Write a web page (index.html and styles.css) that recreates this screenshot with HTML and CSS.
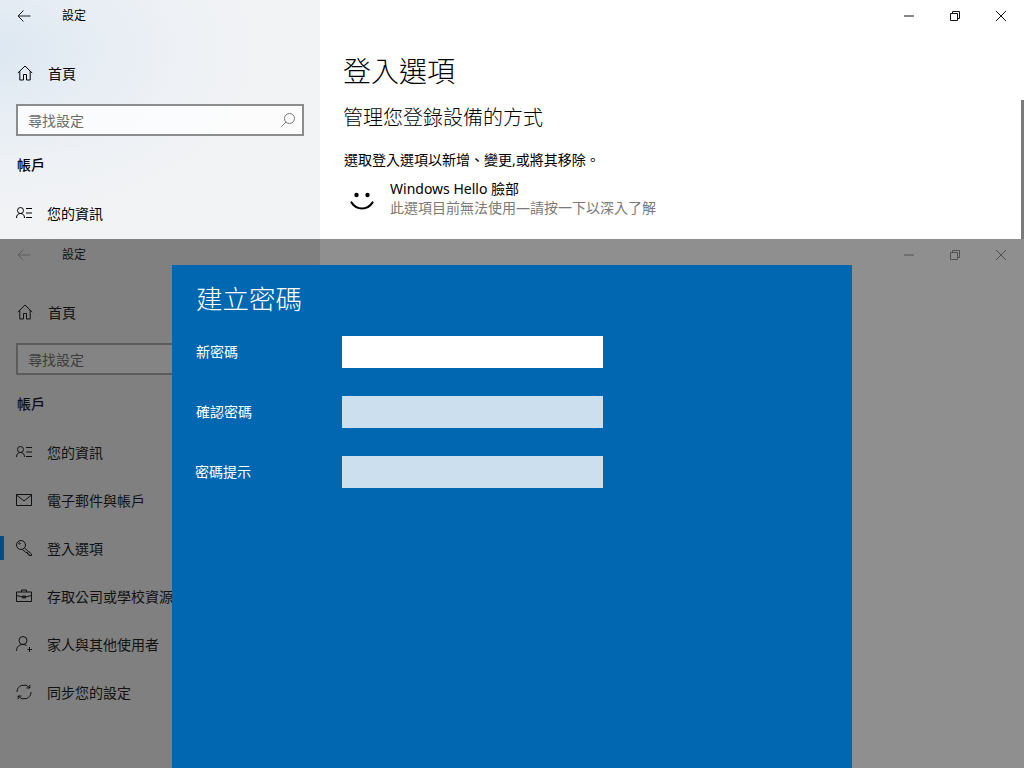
FILE: index.html
```html
<!DOCTYPE html>
<html lang="zh-Hant">
<head>
  <meta charset="UTF-8" />
  <title>設定</title>
  <link rel="stylesheet" href="styles.css">
</head>
<body>
  <!-- window behind -->
  <div class="window window-top">
    <aside class="sidebar">
      <div class="titlebar">
        <svg class="back" width="16" height="16" viewBox="0 0 16 16"><path d="M14.5 8H2M7.5 2.5 2 8l5.500 5.500"/></svg>
        <span class="app-name">設定</span>
      </div>
      <div class="nav-row home">
        <svg class="icon" width="16" height="16" viewBox="0 0 16 16"><path d="M.8 8 8 1l7.200 7M2.800 6.300V15H6.500V9.500H9.500V15H13.200V6.300"/></svg>
        <span>首頁</span>
      </div>
      <div class="search">
        <span>尋找設定</span>
        <svg width="16" height="16" viewBox="0 0 16 16"><circle cx="9.500" cy="6.500" r="5"/><path d="M6 10 1.500 14.500"/></svg>
      </div>
      <h3 class="section">帳戶</h3>
      <div class="nav-row">
        <svg class="icon" width="16" height="16" viewBox="0 0 16 16"><circle cx="4.500" cy="5.500" r="3"/><path d="M.5 13c0-3 1.500-4.500 4-4.500s4 1.500 4 4.500M10 3.500h6M10 8h6M10 12.500h6"/></svg>
        <span>您的資訊</span>
      </div>
    </aside>
    <main class="content">
      <div class="controls">
        <svg width="46" height="32" viewBox="0 0 46 32"><path d="M18 16h10"/></svg>
        <svg width="46" height="32" viewBox="0 0 46 32"><path d="M18.500 13.500h7v7h-7zM20.500 13.500v-2h7v7h-2"/></svg>
        <svg width="46" height="32" viewBox="0 0 46 32"><path d="m18 11 10 10M28 11 18 21"/></svg>
      </div>
      <h1>登入選項</h1>
      <h2>管理您登錄設備的方式</h2>
      <p class="intro">選取登入選項以新增、變更,或將其移除。</p>
      <div class="option">
        <svg class="smile" width="24" height="24" viewBox="0 0 24 24"><circle cx="6.500" cy="6" r="2.200"/><circle cx="17.500" cy="6" r="2.200"/><path d="M1.500 13.500c2.500 4 6 6 10.500 6s8-2 10.500-6"/></svg>
        <div>
          <div class="option-name">Windows Hello 臉部</div>
          <div class="option-note">此選項目前無法使用—請按一下以深入了解</div>
        </div>
      </div>
    </main>
    <div class="scrollbar"></div>
  </div>

  <!-- window in front, dimmed behind the dialog -->
  <div class="window window-dim">
    <aside class="sidebar">
      <div class="titlebar">
        <svg class="back" width="16" height="16" viewBox="0 0 16 16"><path d="M14.500 8H2M7.500 2.500 2 8l5.500 5.500"/></svg>
        <span class="app-name">設定</span>
      </div>
      <div class="nav-row home">
        <svg class="icon" width="16" height="16" viewBox="0 0 16 16"><path d="M.8 8 8 1l7.200 7M2.800 6.300V15H6.500V9.500H9.500V15H13.200V6.300"/></svg>
        <span>首頁</span>
      </div>
      <div class="search">
        <span>尋找設定</span>
      </div>
      <h3 class="section">帳戶</h3>
      <div class="nav-row">
        <svg class="icon" width="16" height="16" viewBox="0 0 16 16"><circle cx="4.500" cy="5.500" r="3"/><path d="M.5 13c0-3 1.500-4.500 4-4.500s4 1.500 4 4.500M10 3.500h6M10 8h6M10 12.500h6"/></svg>
        <span>您的資訊</span>
      </div>
      <div class="nav-row">
        <svg class="icon" width="16" height="16" viewBox="0 0 16 16"><path d="M.5 2.500h15v11H.5zM.5 3 8 9l7.500-6"/></svg>
        <span>電子郵件與帳戶</span>
      </div>
      <div class="nav-row active">
        <svg class="icon" width="16" height="16" viewBox="0 0 16 16"><circle cx="5" cy="5" r="4.500"/><circle cx="3.500" cy="3.500" r=".7"/><path d="m8.500 8 7 6v1.500h-2.500v-1.500h-1.500v-1.500h-1.500l-3.500-3"/></svg>
        <span>登入選項</span>
      </div>
      <div class="nav-row">
        <svg class="icon" width="16" height="16" viewBox="0 0 16 16"><path d="M.5 4h15v9.500H.5zM5.500 4V2h5v2M.5 7.500 6.500 9h3l6-1.500M6.500 8h3v2h-3z"/></svg>
        <span>存取公司或學校資源</span>
      </div>
      <div class="nav-row">
        <svg class="icon" width="16" height="16" viewBox="0 0 16 16"><circle cx="7" cy="4.500" r="4"/><path d="M.5 15c0-4 2.500-6.500 6.500-6.500 1.500 0 2.500.3 3.500 1M11.500 13.500h4.500M13.500 11v5"/></svg>
        <span>家人與其他使用者</span>
      </div>
      <div class="nav-row">
        <svg class="icon" width="16" height="16" viewBox="0 0 16 16"><path d="M1 8a7 7 0 0 1 12.500-4.300M15 8A7 7 0 0 1 2.500 12.300M13.800.8v3.200h-3.300M2.200 15.200V12h3.300"/></svg>
        <span>同步您的設定</span>
      </div>
    </aside>
    <main class="content">
      <div class="controls">
        <svg width="46" height="32" viewBox="0 0 46 32"><path d="M18 16h10"/></svg>
        <svg width="46" height="32" viewBox="0 0 46 32"><path d="M18.500 13.500h7v7h-7zM20.500 13.500v-2h7v7h-2"/></svg>
        <svg width="46" height="32" viewBox="0 0 46 32"><path d="m18 11 10 10M28 11 18 21"/></svg>
      </div>
    </main>

    <form class="dialog">
      <h2>建立密碼</h2>
      <label class="field"><span>新密碼</span><input type="password" class="focused"></label>
      <label class="field"><span>確認密碼</span><input type="password"></label>
      <label class="field hint"><span>密碼提示</span><input type="text"></label>
    </form>
  </div>
</body>
</html>
```

FILE: styles.css
```css
* { box-sizing: border-box; }
html, body { margin: 0; height: 100%; overflow: hidden; }
body {
  font-family: "Noto Sans", "Noto Sans CJK TC", sans-serif;
  font-size: 14px;
  color: #000;
  background: #fff;
}
svg { fill: none; stroke: currentColor; stroke-width: 1; flex: none; }

.window { position: relative; display: flex; width: 1024px; overflow: hidden; }
.window-top { height: 239px; }
.window-dim { height: 529px; background: #8f8f8f; color: #111; }

.sidebar { width: 320px; flex: none; }
.window-top .sidebar {
  background: radial-gradient(ellipse 300px 190px at 0 50px, #dde8f2 0%, #eef1f5 60%, #f2f3f4 100%);
}
.window-dim .sidebar { background: #808080; }

.titlebar { display: flex; align-items: center; height: 32px; padding-left: 16px; }
.back { color: #222; }
.window-dim .back { color: #5f5f5f; }
.app-name { margin-left: 30px; font-size: 12px; line-height: 16px; }

.nav-row { display: flex; align-items: center; height: 48px; padding-left: 16px; }
.nav-row .icon { margin-right: 15px; }
.nav-row.home { margin-top: 17px; margin-bottom: 7px; }
.nav-row.home .icon { margin-left: 1px; margin-right: 15px; }
.active { position: relative; }
.active::before {
  content: "";
  position: absolute;
  left: 0;
  top: 12px;
  width: 4px;
  height: 24px;
  background: #004c84;
}

.search {
  display: flex;
  align-items: center;
  justify-content: space-between;
  width: 288px;
  height: 32px;
  margin-left: 16px;
  padding: 0 6px 0 10px;
  border: 2px solid #8c8c8c;
  background: rgba(255, 255, 255, 0.75);
  color: #6b6b6b;
}
.search svg { color: #777; }
.window-dim .search { border-color: #5c5c5c; background: #848484; color: #3c3c3c; }

.section { height: 20px; margin: 19px 0 14px 17px; font-size: 14px; line-height: 20px; font-weight: 500; }

.content { flex: 1; padding-left: 24px; }
.controls { display: flex; justify-content: flex-end; height: 32px; }
.controls svg { color: #111; }
.window-dim .controls svg { color: #505050; }

h1 { margin: 19px 0 0 -1px; font-size: 28px; line-height: 40px; font-weight: 300; }
.content h2 { margin: 13px 0 0 -1px; font-size: 20px; line-height: 28px; font-weight: 300; }
.intro { margin: 18px 0 0; line-height: 20px; }

.option { display: flex; align-items: flex-start; margin-top: 9px; }
.smile { margin: 10px 16px 0 6px; stroke-width: 2.200; stroke-linecap: round; }
.smile circle { fill: currentColor; stroke: none; }
.option-name { line-height: 20px; font-size: 14px; }
.option-note { line-height: 18px; color: #7a7a7a; }

.scrollbar {
  position: absolute;
  right: 0;
  top: 100px;
  bottom: 0;
  width: 3px;
  background: #7a7a7a;
}

/* dialog lies over the dimmed window */
.dialog {
  position: absolute;
  left: 172px;
  top: 26px;
  width: 680px;
  bottom: 0;
  padding: 14px 24px 0;
  background: #0067b0;
  color: #fff;
}
.dialog h2 { margin: 0 0 17px; font-size: 26.500px; line-height: 40px; font-weight: 300; }
.field { display: flex; align-items: center; height: 32px; margin-bottom: 28px; }
.field span { width: 146px; margin-top: -2px; flex: none; }
.field.hint span { margin-left: -1px; margin-right: 1px; }
.field input {
  width: 261px;
  height: 32px;
  border: none;
  border-radius: 0;
  background: #cbdfee;
}
.field input.focused { background: #fff; }
```
